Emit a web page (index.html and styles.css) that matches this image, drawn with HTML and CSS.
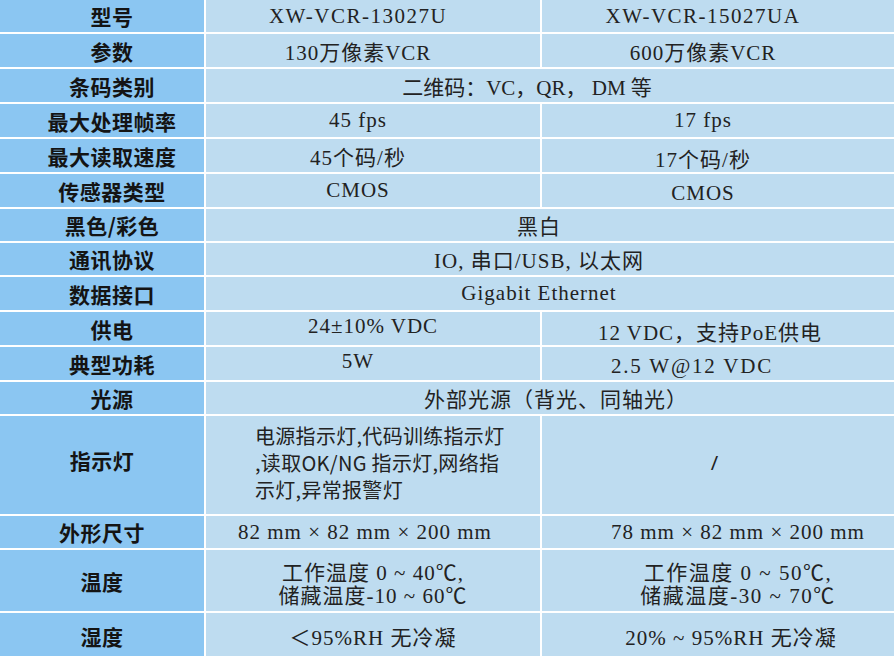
FILE: index.html
```html
<!DOCTYPE html>
<html lang="zh-CN">
<head>
<meta charset="utf-8">
<title>规格参数</title>
<link rel="stylesheet" href="styles.css">
</head>
<body>
<div class="spec">
  <div class="h hr">型号</div>
  <div class="c sl wide">XW-VCR-13027U</div>
  <div class="c sl wide">XW-VCR-15027UA</div>

  <div class="h hr">参数</div>
  <div class="c sl">130万像素VCR</div>
  <div class="c sl">600万像素VCR</div>

  <div class="h hr">条码类别</div>
  <div class="c span sl2 tight">二维码：VC，QR， DM 等</div>

  <div class="h hr">最大处理帧率</div>
  <div class="c sl">45 fps</div>
  <div class="c sl">17 fps</div>

  <div class="h hr">最大读取速度</div>
  <div class="c sl">45个码/秒</div>
  <div class="c sl dn">17个码/秒</div>

  <div class="h hr">传感器类型</div>
  <div class="c sl">CMOS</div>
  <div class="c sl dn">CMOS</div>

  <div class="h hr">黑色/彩色</div>
  <div class="c span sl1">黑白</div>

  <div class="h hr">通讯协议</div>
  <div class="c span sl1">IO, 串口/USB, 以太网</div>

  <div class="h hr">数据接口</div>
  <div class="c span sl1">Gigabit Ethernet</div>

  <div class="h hr">供电</div>
  <div class="c up">24±10% VDC</div>
  <div class="c dn sl3">12 VDC，支持PoE供电</div>

  <div class="h hr">典型功耗</div>
  <div class="c sl up">5W</div>
  <div class="c sl4 dn">2.5 W@12 VDC</div>

  <div class="h hr">光源</div>
  <div class="c span sr">外部光源（背光、同轴光）</div>

  <div class="h hu">指示灯</div>
  <div class="c ind">电源指示灯,代码训练指示灯<br>,读取OK/NG 指示灯,网络指<br>示灯,异常报警灯</div>
  <div class="c slash">/</div>

  <div class="h">外形尺寸</div>
  <div class="c sl3">82 mm × 82 mm × 200 mm</div>
  <div class="c sr2">78 mm × 82 mm × 200 mm</div>

  <div class="h">温度</div>
  <div class="c two">工作温度 0 ~ 40℃,<br>储藏温度-10 ~ 60℃</div>
  <div class="c two sr2 wide">工作温度 0 ~ 50℃,<br>储藏温度-30 ~ 70℃</div>

  <div class="h">湿度</div>
  <div class="c">＜95%RH 无冷凝</div>
  <div class="c sr3">20% ~ 95%RH 无冷凝</div>
</div>
</body>
</html>
```

FILE: styles.css
```css
html, body {
  margin: 0;
  padding: 0;
  background: #ffffff;
}

.spec {
  width: 894px;
  height: 656px;
  overflow: hidden;
  display: grid;
  grid-template-columns: 204px 334px 1fr;
  grid-template-rows: 32px 33px 33px 33px 33px 33px 32px 32px 33px 33px 33px 32px 98px 32px 61px 45px;
  gap: 2px;
  background: #ffffff;
}

.h {
  background: #8bc6f2;
  color: #141414;
  font-family: "Noto Sans CJK SC", "Noto Sans", sans-serif;
  font-weight: 700;
  font-size: 21px;
  letter-spacing: 0.5px;
  display: flex;
  align-items: center;
  justify-content: center;
}

.hr { padding-left: 20px; }
.hu { padding-bottom: 10px; }

.c {
  background: #bedcf0;
  color: #222222;
  font-family: "Liberation Serif", "Noto Sans CJK SC", serif;
  font-size: 21px;
  letter-spacing: 1px;
  display: flex;
  align-items: center;
  justify-content: center;
  text-align: center;
  white-space: nowrap;
}

.span {
  grid-column: span 2;
}

.wide { letter-spacing: 1.5px; }
.tight { letter-spacing: 0; }
.sl { padding-right: 30px; }
.sl1 { padding-right: 22px; }
.sl2 { padding-right: 46px; }
.sl3 { padding-right: 16px; }
.sl4 { padding-right: 52px; letter-spacing: 1.8px; }
.sr { padding-left: 12px; }
.sr2 { padding-left: 40px; }
.sr3 { padding-left: 26px; }
.dn { padding-top: 5px; }
.up { padding-bottom: 4px; }

.ind {
  justify-content: flex-start;
  text-align: left;
  padding-left: 49px;
  padding-bottom: 6px;
  font-family: "Noto Sans CJK SC", "Noto Sans", sans-serif;
  font-size: 20px;
  line-height: 27px;
  letter-spacing: 0.3px;
}

.slash {
  font-family: "Noto Sans", "Noto Sans CJK SC", sans-serif;
  font-size: 20px;
  padding-bottom: 6px;
  padding-right: 6px;
}

.two {
  line-height: 23px;
  padding-top: 8px;
}
```
